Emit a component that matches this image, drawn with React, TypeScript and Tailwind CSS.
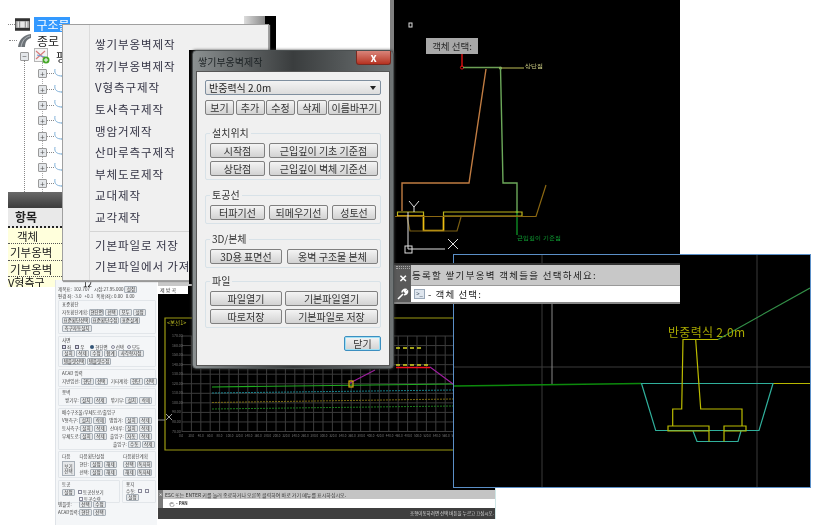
import type { ReactNode } from 'react';

const KR = '[font-family:"Noto_Sans_CJK_KR","Liberation_Sans",sans-serif]';

/* ---------- left tree + table ---------- */

function FilmIcon() {
  return (
    <svg width="16" height="13" viewBox="0 0 16 13">
      <rect x="0.5" y="0.5" width="15" height="12" fill="#e8e8e8" stroke="#555" />
      <rect x="0" y="0" width="16" height="3" fill="#333" />
      <rect x="0" y="10" width="16" height="3" fill="#333" />
      <path d="M2 3v7M5 3v7M11 3v7M14 3v7" stroke="#777" />
    </svg>
  );
}

function RoadIcon() {
  return (
    <svg width="15" height="15" viewBox="0 0 15 15">
      <path d="M1 14C2 7 6 2 14 1V5C10 6 8 9 8 14Z" fill="#6d7378" />
      <path d="M4 14C5 8 8 4 13 3" stroke="#c8ccd0" fill="none" strokeWidth="0.8" />
    </svg>
  );
}

function NodeIcon() {
  return (
    <svg width="16" height="16" viewBox="0 0 16 16">
      <rect x="0.5" y="0.5" width="13" height="13" fill="#f4f4f4" stroke="#b5b5b5" />
      <path d="M2 3L12 12M2 11L11 3" stroke="#d77b7b" strokeWidth="1.2" />
      <path d="M3 7L11 9" stroke="#6fa0d8" strokeWidth="1.2" />
      <circle cx="12" cy="12" r="3.5" fill="#47a829" />
      <path d="M10 12h4M12 10v4" stroke="#fff" />
    </svg>
  );
}

function CurveIcon() {
  return (
    <svg width="9" height="10" viewBox="0 0 9 10">
      <path d="M1 0C0 5 3 7 8 7" stroke="#7fb0d8" fill="none" />
      <circle cx="8" cy="7" r="1" fill="#9cc3e2" />
    </svg>
  );
}

function TreeBox({ sign }: { sign: string }) {
  return (
    <span className="flex h-[9px] w-[9px] shrink-0 items-center justify-center rounded-[1px] border border-[#9a9a9a] bg-[#e4e7ea] text-[8px] leading-none text-[#555]">
      {sign}
    </span>
  );
}

function LeftPanel() {
  const rows = [0, 1, 2, 3, 4, 5, 6, 7];
  return (
    <div className={`absolute left-0 top-0 flex h-[290px] w-[70px] flex-col ${KR}`}>
      <div className="relative h-[192px] shrink-0 overflow-hidden pt-[17px]">
        <div className="absolute bottom-0 left-[24px] top-[60px] border-l border-dotted border-[#888]" />
        <div className="absolute left-[42px] bottom-0 top-[62px] border-l border-dotted border-[#aaa]" />
        <div className="flex h-[15px] items-center pl-[8px]">
          <span className="w-[8px] border-t border-dotted border-[#888]" />
          <FilmIcon />
          <span className="ml-[4px] h-[15px] w-[38px] bg-[#3399ff] pl-[2px] text-[12px] leading-[15px] text-white">구조물</span>
        </div>
        <div className="flex h-[16px] items-center pl-[9px]">
          <span className="w-[8px] border-t border-dotted border-[#888]" />
          <RoadIcon />
          <span className="ml-[5px] text-[12px] leading-[15px] text-[#222]">종로</span>
        </div>
        <div className="flex h-[16px] items-center pl-[20px]">
          <TreeBox sign="−" />
          <span className="ml-[5px]"><NodeIcon /></span>
          <span className="ml-[6px] text-[12px] leading-[15px] text-[#222]">평</span>
        </div>
        <div className="relative flex flex-col pt-[2px]">
          {rows.map((r) => (
            <div key={r} className="flex h-[15.7px] items-center pl-[38px]">
              <TreeBox sign="+" />
              <span className="w-[7px] border-t border-dotted border-[#888]" />
              <CurveIcon />
            </div>
          ))}
        </div>
      </div>
      <div className="ml-[8px] flex flex-col">
        <div className="h-[16px] bg-gradient-to-b from-[#6a6a6a] to-[#3c3c3c]" />
        <div className="flex h-[20px] items-center border-b-2 border-dotted border-[#222] bg-[#e9e9e9] pl-[7px] text-[12px] font-bold leading-[14px] text-[#222]">항목</div>
        <div className="flex h-[16px] items-center border-b border-dotted border-[#555] bg-[#ffffdc] pl-[9px] text-[11.5px] leading-[14px] text-[#222]">객체</div>
        <div className="flex h-[17px] items-center overflow-hidden border-b border-dotted border-[#555] bg-[#ffffdc] pl-[2px] text-[11.5px] leading-[14px] text-[#222] whitespace-nowrap">기부옹벽</div>
        <div className="flex h-[16px] items-center overflow-hidden border-b border-dotted border-[#555] bg-[#ffffdc] pl-[2px] text-[11.5px] leading-[14px] text-[#222] whitespace-nowrap">기부옹벽</div>
        <div className="h-[10px] overflow-hidden bg-[#ffffdc] text-[11px] leading-[10px] text-[#111] whitespace-nowrap">V형측구</div>
      </div>
    </div>
  );
}

function ContextMenu() {
  const top = ['쌓기부옹벽제작', '깎기부옹벽제작', 'V형측구제작', '토사측구제작', '맹암거제작', '산마루측구제작', '부체도로제작', '교대제작', '교각제작'];
  const bottom = ['기본파일로 저장', '기본파일에서 가져오기'];
  return (
    <div className={`absolute left-[62px] top-[24px] flex h-[257px] w-[207px] border border-[#a0a0a0] bg-[#f0f0f0] shadow-[1px_1px_1px_#999] ${KR}`}>
      <div className="w-[27px] shrink-0 border-r border-[#dcdcdc]" />
      <div className="flex-1 pl-[5px] pt-[9px] text-[11.5px] tracking-[0.9px] text-[#334]">
        {top.map((t) => (
          <div key={t} className="flex h-[21.6px] items-center whitespace-nowrap">{t}</div>
        ))}
        <div className="mb-[3px] mt-[3px] -ml-[5px] border-t border-[#d4d4d4]" />
        {bottom.map((t) => (
          <div key={t} className="flex h-[21px] items-center whitespace-nowrap">{t}</div>
        ))}
      </div>
    </div>
  );
}

/* ---------- main dialog ---------- */

function Btn({ w, children, accent }: { w: string; children: ReactNode; accent?: boolean }) {
  return (
    <button
      type="button"
      className={`flex h-[15px] shrink-0 items-center justify-center rounded-[2px] border bg-gradient-to-b from-[#f4f4f4] to-[#d2d2d2] text-[10px] leading-none text-[#333] whitespace-nowrap ${w} ${accent ? 'border-[#3c8fc0] shadow-[inset_0_0_0_1px_#9fe0f5]' : 'border-[#808080]'}`}
    >
      {children}
    </button>
  );
}

function Group({ label, children }: { label: string; children: ReactNode }) {
  return (
    <div className="relative rounded-[2px] border border-[#d8e2e8] px-[4px] pb-[3px] pt-[9px]">
      <span className="absolute -top-[8px] left-[4px] bg-[#f0f0f0] px-[2px] text-[10px] leading-[14px] text-[#333]">{label}</span>
      {children}
    </div>
  );
}

function Dialog() {
  return (
    <div className={`absolute left-[192px] top-[50px] flex h-[319px] w-[202px] flex-col rounded-[4px] border border-[#4a4f50] bg-gradient-to-r from-[#8b9091] via-[#3a3d3e] via-50% to-[#6f7475] shadow-[0_0_3px_#444] ${KR}`}>
      <div className="relative flex h-[20px] shrink-0 items-center pl-[5px] text-[10px] text-[#1c2224]">
        쌓기부옹벽제작
        <span className="absolute right-[2px] top-0 flex h-[14px] w-[35px] items-center justify-center rounded-b-[3px] border border-t-0 border-[#7a2a20] bg-gradient-to-b from-[#d9847a] to-[#b5301f] text-[11px] font-bold leading-none text-white">x</span>
      </div>
      <div className="mx-[3px] flex h-[295px] flex-col border border-[#555] bg-[#f0f0f0] px-[8px] pt-[8px]">
        <div className="flex h-[15px] shrink-0 items-center justify-between rounded-[2px] border border-[#7f8f9f] bg-gradient-to-b from-[#f3f3f3] to-[#dcdcdc] pl-[3px] pr-[4px] text-[10px] text-[#222]">
          반중력식 2.0m
          <span className="h-0 w-0 border-x-[3px] border-t-[4px] border-x-transparent border-t-[#222]" />
        </div>
        <div className="mt-[5px] flex justify-between">
          <Btn w="w-[29px]">보기</Btn>
          <Btn w="w-[29px]">추가</Btn>
          <Btn w="w-[29px]">수정</Btn>
          <Btn w="w-[30px]">삭제</Btn>
          <Btn w="w-[53px]">이름바꾸기</Btn>
        </div>

        <div className="mt-[18px] flex flex-col gap-[15px]">
          <Group label="설치위치">
            <div className="flex flex-col gap-[3px]">
              <div className="flex gap-[4px]">
                <Btn w="w-[55px]">시작점</Btn>
                <Btn w="w-[109px]">근입깊이 기초 기준점</Btn>
              </div>
              <div className="flex gap-[4px]">
                <Btn w="w-[55px]">상단점</Btn>
                <Btn w="w-[109px]">근입깊이 벽체 기준선</Btn>
              </div>
            </div>
          </Group>
          <Group label="토공선">
            <div className="flex gap-[4px]">
              <Btn w="w-[55px]">터파기선</Btn>
              <Btn w="w-[59px]">되메우기선</Btn>
              <Btn w="w-[44px]">성토선</Btn>
            </div>
          </Group>
          <Group label="3D/본체">
            <div className="flex gap-[5px]">
              <Btn w="w-[72px]">3D용 표면선</Btn>
              <Btn w="w-[91px]">옹벽 구조물 본체</Btn>
            </div>
          </Group>
        </div>
        <div className="mt-[13px]">
          <Group label="파일">
            <div className="flex flex-col gap-[3px]">
              <div className="flex gap-[3px]">
                <Btn w="w-[72px]">파일열기</Btn>
                <Btn w="w-[93px]">기본파일열기</Btn>
              </div>
              <div className="flex gap-[3px]">
                <Btn w="w-[72px]">따로저장</Btn>
                <Btn w="w-[93px]">기본파일로 저장</Btn>
              </div>
            </div>
          </Group>
        </div>
        <div className="mt-[8px] flex justify-end">
          <Btn w="w-[37px]" accent>닫기</Btn>
        </div>
      </div>
    </div>
  );
}

/* ---------- CAD views ---------- */

function CadTop() {
  return (
    <div className="absolute left-[390px] top-0 h-[264px] w-[290px] border-l-4 border-[#808080] bg-black">
      <svg width="286" height="264" viewBox="394 0 286 264" className="block">
        <rect x="409" y="23" width="3" height="4" fill="none" stroke="#ddd" />
        <path d="M462 53V67" stroke="#e01010" strokeWidth="1.4" />
        <circle cx="462" cy="67.5" r="1.6" fill="none" stroke="#e01010" />
        <path d="M463 67.5H500" stroke="#6ca055" strokeWidth="1.4" />
        <path d="M500 68H524" stroke="#a0a048" strokeWidth="1.2" />
        <circle cx="500.5" cy="68" r="1.6" fill="#8ab05a" />
        <text x="525" y="68" fontSize="6" fill="#e0e090">상단점</text>
        <path d="M486 69L469 183H402V211" fill="none" stroke="#c07c42" strokeWidth="1.4" />
        <path d="M500.5 68L503 183H517V212" fill="none" stroke="#6ca85a" strokeWidth="1.4" />
        <path d="M517 212V235" stroke="#0e8c24" strokeWidth="1.4" />
        <circle cx="517" cy="212" r="1.4" fill="#30a040" />
        <text x="517" y="240" fontSize="6" fill="#10b038">근입깊이 기준점</text>
        <path d="M397.5 216V212H423.5V230.5H443.5V212H522V216H443.5" fill="none" stroke="#bcb41c" strokeWidth="1.2" />
        <path d="M397 216H423.5V230.5H443.5V216" fill="none" stroke="#ecbc12" strokeWidth="1.6" />
        <path d="M395 216.5H536L546 185" fill="none" stroke="#8c6812" strokeWidth="1.2" />
        <path d="M407 217L410 231H457L461 217" fill="none" stroke="#7a5e12" strokeWidth="1.2" />
        <path d="M408 212V249H445" fill="none" stroke="#e0e0e0" strokeWidth="1" />
        <rect x="405" y="246" width="7" height="7" fill="none" stroke="#e0e0e0" strokeWidth="1" />
        <path d="M409 201L414 207L419 201M414 207V212M448 239L458 249M458 239L448 249" fill="none" stroke="#e0e0e0" strokeWidth="1" />
      </svg>
      <div className={`absolute left-[32px] top-[38px] flex h-[16px] w-[52px] items-center justify-center bg-[#a8a8a8] text-[9.5px] text-[#2a2a2a] ${KR}`}>객체 선택:</div>
    </div>
  );
}

function CommandWindow() {
  return (
    <div className={`absolute left-[394px] top-[263px] flex h-[41px] w-[286px] border-y-2 border-t-[#333] border-b-[#888] bg-[#c8c8c8] ${KR}`}>
      <div className="flex w-[17px] shrink-0 flex-col items-center bg-[#5a5a5a] text-white">
        <span className="mt-[1px] h-[3px] w-[14px] border-y border-dotted border-[#aaa]" />
        <span className="mt-[3px] text-[10px] font-bold leading-[12px]">✕</span>
        <svg width="12" height="12" viewBox="0 0 12 12" className="mt-[4px]">
          <path d="M1 11L6 6M5 4.5C5 2.5 7 1 9 1.5L7.5 3.5L8.5 4.5L10.5 3C11 5 9 7 7 6.5" stroke="#fff" strokeWidth="1.6" fill="none" />
        </svg>
      </div>
      <div className="flex min-w-0 flex-1 flex-col">
        <div className="flex h-[21px] items-center border-b border-[#999] pl-[1px] text-[9.5px] tracking-[1.3px] text-[#222] whitespace-nowrap">
          등록할 쌓기부옹벽 객체들을 선택하세요:
        </div>
        <div className="flex flex-1 items-center bg-white pl-[3px] text-[9.5px] tracking-[1.1px] text-[#222]">
          <span className="mr-[3px] flex h-[10px] w-[11px] items-center justify-center border border-[#9aa8b8] bg-[#dfe6ee] text-[6px] leading-none tracking-normal text-[#345]">&gt;_</span>
          - 객체 선택:
        </div>
      </div>
    </div>
  );
}

function CadRight() {
  return (
    <div className={`absolute left-[453px] top-[254px] h-[234px] w-[358px] border border-[#5b8fc7] bg-black ${KR}`}>
      <svg width="356" height="232" viewBox="454 255 356 232" className="block">
        <path d="M454 367H810M542 255V487M757 255V487" stroke="#3a3a3a" strokeWidth="1" />
        <path d="M552 300V384" stroke="#888" strokeWidth="1" />
        <path d="M454 386L641 383.5" stroke="#0c8a0c" strokeWidth="1.4" />
        <path d="M641 383.5H810" stroke="#b8b800" strokeWidth="1.1" />
        <path d="M641.5 383.5H773L759 430.5H655.7Z" fill="none" stroke="#30b09c" strokeWidth="1.2" />
        <path d="M693 431L697 441.5H738L741 431" fill="none" stroke="#30b09c" strokeWidth="1.2" />
        <path d="M718 339.5H683L681.7 409H672.7V426H668V431H709M695.7 340L700.7 409H742V426M668 426H709V441.5M724 441.5V426H746V431H724" fill="none" stroke="#bcbc00" strokeWidth="1.2" />
        <path d="M718 339.5L810 288" stroke="#339048" strokeWidth="1.1" />
      </svg>
      <span className="absolute left-[214px] top-[69px] text-[12px] leading-[16px] tracking-[0.3px] text-[#a8a800] whitespace-nowrap">반중력식 2.0m</span>
    </div>
  );
}

function CadLower() {
  const vs = Array.from({ length: 30 }, (_, i) => 182 + i * 9.4);
  const hs = Array.from({ length: 11 }, (_, i) => 336 + i * 9.55);
  return (
    <div className={`absolute left-[158px] top-[282px] flex h-[237px] w-[338px] flex-col overflow-hidden border-r border-[#cfe6e6] bg-black ${KR}`}>
      <div className="h-[4px] shrink-0 bg-[#c8c8c8]" />
      <div className="h-[8px] w-[30px] shrink-0 bg-white pl-[2px] text-[5px] leading-[8px] text-[#333]">제 방 곡</div>
      <svg width="338" height="196" viewBox="158 294 338 196" className="block shrink-0">
        <path d="M453 318H165V450H453" fill="none" stroke="#9c9a12" strokeWidth="1.2" />
        <text x="167" y="325" fontSize="5.5" fill="#b8b822">&lt;본선1&gt;</text>
        {vs.map((x) => (
          <path key={x} d={`M${x} 336V432`} stroke="#3c3c3c" strokeWidth="1" />
        ))}
        {hs.map((y) => (
          <path key={y} d={`M182 ${y}H453`} stroke="#3c3c3c" strokeWidth="1" />
        ))}
        {hs.map((y, i) => (
          <text key={y} x="172" y={y + 1} fontSize="3.5" fill="#777">{(170 - i * 10).toFixed(2)}</text>
        ))}
        {vs.map((x, i) => (
          <text key={x} x={x - 3} y="437" fontSize="3" fill="#777">{(i * 20).toFixed(1)}</text>
        ))}
        <path d="M212 387L453 384" stroke="#20ac20" strokeWidth="1.2" />
        <path d="M212 393L453 390" stroke="#17808a" strokeWidth="1" strokeDasharray="2 1" />
        <path d="M212 402.5L453 399" stroke="#7c6a12" strokeWidth="1" strokeDasharray="2 1" />
        <path d="M212 409L453 406" stroke="#1e7c1e" strokeWidth="1" strokeDasharray="2 1" />
        <path d="M350 383L375 370M430 367L453 384" stroke="#a01ea0" strokeWidth="1.1" fill="none" />
        <path d="M396 367.5H430" stroke="#f01020" strokeWidth="1.6" />
        <path d="M396 348H423M396 365H430" stroke="#d4d420" strokeWidth="1.5" strokeDasharray="4 3" />
        <rect x="349" y="381" width="4" height="6" fill="none" stroke="#d8ac10" strokeWidth="1.2" />
        <path d="M158 420H165" stroke="#888" />
        <path d="M166 414L172 420M172 414L166 420" stroke="#ccc" strokeWidth="0.8" />
      </svg>
      <div className="flex min-h-0 flex-1 flex-col">
        <div className="flex h-[18px] shrink-0">
          <div className="flex w-[5px] flex-col items-center bg-[#7a7a7a] text-[4px] leading-[9px] text-white">
            <span>✕</span>
          </div>
          <div className="flex flex-1 flex-col">
            <div className="h-[9px] bg-[#c4c4c4] pl-[2px] text-[5px] leading-[9px] text-[#333] whitespace-nowrap">ESC 또는 ENTER 키를 눌러 종료하거나 오른쪽 클릭하여 바로 가기 메뉴를 표시하십시오.</div>
            <div className="flex h-[9px] items-center bg-white pl-[6px] text-[4.5px] font-bold leading-[9px] text-[#333]">
              <svg width="6" height="6" viewBox="0 0 6 6" className="mr-[1px]">
                <path d="M1 3V2M2 3V1M3 3V1M4 3V1.5M5 3.5C5 5 4 6 3 6S1 5 1 3" stroke="#555" strokeWidth="0.6" fill="none" />
              </svg>
              - PAN
            </div>
          </div>
        </div>
        <div className="flex flex-1 items-center justify-end bg-[#3f3f3f] pr-[1px] text-[4.5px] text-[#ddd] whitespace-nowrap">
          조형이동하려면 선택 버튼을 누르고 끄십시오.
        </div>
      </div>
    </div>
  );
}

/* ---------- tiny sidebar ---------- */

function M({ children, w }: { children: ReactNode; w?: string }) {
  return (
    <span className={`flex h-[7px] shrink-0 items-center justify-center rounded-[1px] border border-[#a8b0b8] bg-[#e6e8ea] px-[1px] text-[4.5px] leading-none text-[#333] whitespace-nowrap ${w ?? 'w-[13px]'}`}>
      {children}
    </span>
  );
}

function SideGroup({ title, children }: { title: string; children?: ReactNode }) {
  return (
    <div className="flex flex-col gap-[1px] rounded-[1px] border border-[#e2e6ea] px-[3px] pb-[1px]">
      <span className="h-[7px] text-[4.5px] leading-[7px] text-[#444] whitespace-nowrap">{title}</span>
      {children}
    </div>
  );
}

function R({ children, className }: { children: ReactNode; className?: string }) {
  return <div className={`flex items-center gap-[1px] text-[4.5px] leading-none text-[#444] whitespace-nowrap ${className ?? ''}`}>{children}</div>;
}

function Sidebar() {
  return (
    <div className={`absolute left-[55px] top-[280px] flex h-[245px] w-[102px] flex-col gap-[1.5px] overflow-hidden border-l border-[#dfe3e8] bg-[#f4f6f8] pl-[2px] pr-[1px] blur-[0.25px] ${KR}`}>
      <div className="h-[7px] shrink-0 pl-[25px] text-[8px] leading-[7px] text-[#111]">12</div>
      <R className="-mt-[3px]"><span>제목표:</span><span className="ml-[1px]">102.707</span><span className="ml-[3px]">시점:27.95.000</span><M>설정</M></R>
      <R><span>편경 좌:</span><span>-3.0</span><span className="ml-[2px]">+0.1</span><span className="ml-[2px]">폭확(좌): 0.00</span><span className="ml-[2px]">0.00</span></R>
      <SideGroup title="표준횡단">
        <R><span>자동횡단계획:</span><M w="w-[15px]">현단면</M><M>선택</M><M>모두</M><M>설정</M></R>
        <R><M w="w-[28px]">표준횡단선택</M><M w="w-[28px]">표준횡단수정</M><M w="w-[20px]">표준설계</M></R>
        <R><M w="w-[30px]">측구자동설치</M></R>
      </SideGroup>
      <SideGroup title="사면">
        <R>
          <span className="h-[4px] w-[4px] border border-[#667] bg-[#dde]" /><span className="mr-[3px]">좌</span>
          <span className="h-[4px] w-[4px] border border-[#667] bg-[#dde]" /><span className="mr-[5px]">우</span>
          <span className="h-[4px] w-[4px] rounded-full bg-[#357]" /><span className="mr-[2px]">현단면</span>
          <span className="h-[4px] w-[4px] rounded-full border border-[#889]" /><span className="mr-[2px]">선택</span>
          <span className="h-[4px] w-[4px] rounded-full border border-[#889]" /><span>모두</span>
        </R>
        <R><M>설치</M><M>삭제</M><M>수정</M><M>합계</M><M w="w-[26px]">사각형지정</M></R>
        <R><M w="w-[24px]">템플릿선택</M><M w="w-[24px]">템플릿수정</M></R>
      </SideGroup>
      <SideGroup title="ACAD 입력">
        <R><span>지반입선:</span><M>현단</M><M>선택</M><span className="ml-[2px]">기타계획:</span><M>현단</M><M>선택</M></R>
      </SideGroup>
      <SideGroup title="옹벽">
        <R><span className="ml-[3px]">쌓기부:</span><M>설치</M><M>삭제</M><span className="ml-[3px]">깎기부:</span><M>설치</M><M>삭제</M></R>
      </SideGroup>
      <SideGroup title="배수구조물/부체도로/출입구">
        <R><span className="w-[17px]">V형측구:</span><M>설치</M><M>삭제</M><span className="ml-[2px] w-[17px]">맹암거:</span><M>설치</M><M>삭제</M></R>
        <R><span className="w-[17px]">토사측구:</span><M>설치</M><M>삭제</M><span className="ml-[2px] w-[17px]">산마루:</span><M>설치</M><M>삭제</M></R>
        <R><span className="w-[17px]">부체도로:</span><M>설치</M><M>삭제</M><span className="ml-[2px] w-[17px]">출입구:</span><M>자동</M><M>삭제</M></R>
        <R><span className="ml-[51px] w-[17px]">출입구:</span><M>수동</M><M>삭제</M></R>
      </SideGroup>
      <div className="flex gap-[2px] rounded-[1px] border border-[#e2e6ea] px-[3px] py-[1px] text-[4.5px] text-[#444]">
        <div className="flex w-[18px] flex-col gap-[1px] whitespace-nowrap">
          <span className="leading-[7px]">다음</span>
          <span className="flex h-[15px] w-[13px] items-center justify-center border border-[#a8b0b8] bg-[#e6e8ea] text-center leading-[5px] whitespace-normal">보기 선택</span>
        </div>
        <div className="flex flex-col gap-[1px]">
          <span className="leading-[7px] whitespace-nowrap">다음횡단설정</span>
          <R><span>현단:</span><M>설정</M><M>해제</M></R>
          <R><span>선택:</span><M>설정</M><M>해제</M></R>
        </div>
        <div className="ml-[4px] flex flex-col gap-[1px]">
          <span className="leading-[7px] whitespace-nowrap">다음횡단계획</span>
          <R><M>선택</M><M w="w-[15px]">독자처</M></R>
          <R><M>해제</M><M w="w-[15px]">독자체</M></R>
        </div>
      </div>
      <div className="flex gap-[2px]">
        <div className="flex w-[62px] flex-col gap-[1px] rounded-[1px] border border-[#e2e6ea] px-[3px] pb-[1px] text-[4.5px] text-[#444]">
          <span className="leading-[7px]">토공</span>
          <R><M>설정</M><span className="ml-[2px] h-[4px] w-[4px] border border-[#889]" /><span>토공선보기</span></R>
          <R><span className="ml-[17px] h-[4px] w-[4px] border border-[#889]" /><span>토공수량</span></R>
        </div>
        <div className="flex flex-1 flex-col gap-[1px] rounded-[1px] border border-[#e2e6ea] px-[3px] pb-[1px] text-[4.5px] text-[#444]">
          <span className="leading-[7px]">용지</span>
          <R><span>수동:</span><span className="ml-[1px] h-[4px] w-[4px] border border-[#889]" /><span className="ml-[2px] h-[4px] w-[4px] border border-[#889]" /></R>
          <R><M>설정</M></R>
        </div>
      </div>
      <R className="-mt-[4px]"><span className="w-[20px]">템플릿:</span><M>선택</M><M>수정</M></R>
      <R><span className="w-[20px]">ACAD입력:</span><M>현단</M><M>선택</M></R>
    </div>
  );
}

export default function App() {
  return (
    <div className="relative h-[527px] w-[822px] overflow-hidden bg-white blur-[0.35px]">
      <LeftPanel />
      <Sidebar />
      <CadLower />
      <CadTop />
      <CadRight />
      <CommandWindow />
      <div className="absolute left-[244px] top-[16px] h-[8px] w-[21px] bg-gradient-to-r from-[#ddd] to-[#888]" />
      <div className="absolute left-[265px] top-[16px] h-[34px] w-[11px] bg-black" />
      <ContextMenu />
      <div className="absolute left-[189px] top-[50px] h-[234px] w-[90px] bg-black" />
      <Dialog />
    </div>
  );
}
